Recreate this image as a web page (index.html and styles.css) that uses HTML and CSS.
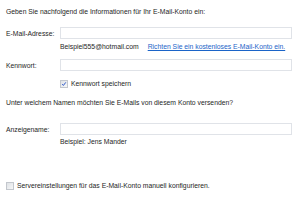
FILE: index.html
```html
<!DOCTYPE html>
<html lang="de">
<head>
<meta charset="utf-8">
<link rel="stylesheet" href="styles.css">
</head>
<body>
<div class="page">
  <p class="intro">Geben Sie nachfolgend die Informationen für Ihr E-Mail-Konto ein:</p>
  <div class="row r-email">
    <span class="label">E-Mail-Adresse:</span>
    <span class="field"></span>
  </div>
  <div class="hint h-email">
    <span>Beispiel555@hotmail.com</span>
    <a class="link" href="#">Richten Sie ein kostenloses E-Mail-Konto ein.</a>
  </div>
  <div class="row r-pass">
    <span class="label">Kennwort:</span>
    <span class="field"></span>
  </div>
  <div class="check c-save">
    <span class="box checked"><svg viewBox="0 0 8 8" width="8" height="8"><path d="M1.6 4.2 L3.2 5.9 L6.4 1.8" fill="none" stroke="#2a55c8" stroke-width="1.3"/></svg></span>
    <span>Kennwort speichern</span>
  </div>
  <p class="question">Unter welchem Namen möchten Sie E-Mails von diesem Konto versenden?</p>
  <div class="row r-name">
    <span class="label">Anzeigename:</span>
    <span class="field"></span>
  </div>
  <div class="hint h-name"><span>Beispiel: Jens Mander</span></div>
  <div class="check c-manual">
    <span class="box"></span>
    <span>Servereinstellungen für das E-Mail-Konto manuell konfigurieren.</span>
  </div>
</div>
</body>
</html>
```
FILE: styles.css
```css
html, body {
  margin: 0;
  padding: 0;
  background: #ffffff;
}
.page {
  width: 300px;
  height: 202px;
  padding: 7px 8px 0 6px;
  box-sizing: border-box;
  font-family: "Liberation Sans", Arial, sans-serif;
  font-size: 6.8px;
  line-height: 9px;
  color: #262626;
  display: flex;
  flex-direction: column;
}
p { margin: 0; }
.row {
  display: flex;
  align-items: center;
}
.label {
  width: 54px;
  flex: none;
}
.field {
  flex: 1;
  height: 12px;
  box-sizing: border-box;
  border: 1px solid #e0e3e8;
  background: #ffffff;
}
.r-email { margin-top: 11px; }
.hint {
  padding-left: 54px;
  margin-top: 3px;
  display: flex;
  gap: 9px;
}
.link {
  color: #1b64c8;
  text-decoration: underline;
}
.r-pass { margin-top: 8px; }
.check {
  display: flex;
  align-items: center;
  gap: 3px;
}
.c-save { margin-top: 8px; padding-left: 54px; }
.box {
  width: 8px;
  height: 8px;
  box-sizing: border-box;
  border: 1px solid #c3c7cd;
  background: linear-gradient(135deg, #dfe2e6, #f6f7f8);
  display: flex;
  align-items: center;
  justify-content: center;
  flex: none;
}
.box svg { display: block; }
.question { margin-top: 10px; }
.r-name { margin-top: 16px; }
.h-name { margin-top: 2px; }
.c-manual { margin-top: 35px; }
```
